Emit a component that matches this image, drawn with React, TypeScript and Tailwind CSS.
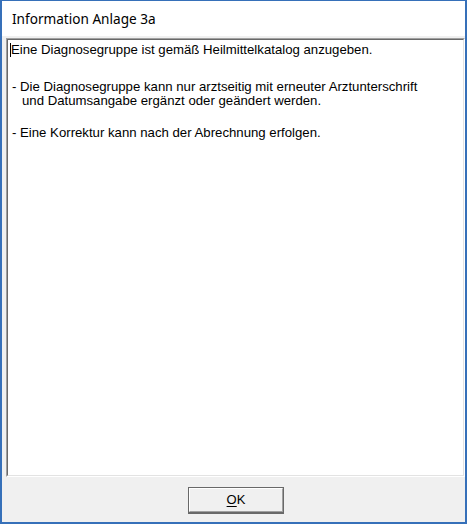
export default function App() {
  return (
    <div className="w-[467px] h-[524px] flex flex-col border-t border-x-2 border-b-2 border-[#3670b9] bg-[#f0f0f0] font-['Liberation_Sans',Arial,sans-serif] text-black">
      {/* title bar */}
      <div className="h-[35px] bg-white flex items-center pl-[10px] shrink-0">
        <span className="font-['Noto_Sans',sans-serif] text-[13.6px] leading-none">
          Information Anlage 3a
        </span>
      </div>

      {/* client area */}
      <div className="flex-1 flex flex-col pl-[4px] pt-[2px]">
        <div className="flex-1 flex border border-t-[#a0a0a0] border-l-[#a0a0a0] border-b-white border-r-white">
          <div className="flex-1 border border-t-[#696969] border-l-[#696969] border-b-[#e3e3e3] border-r-[#e3e3e3] bg-white pt-[3px] text-[13.2px] leading-[14px]">
            <div className="pl-[2px] flex items-center">
              <span className="inline-block w-px h-[14px] bg-black" />
              <span>Eine Diagnosegruppe ist gemäß Heilmittelkatalog anzugeben.</span>
            </div>
            <div className="h-[23px]" />
            <div className="pl-[4px]">- Die Diagnosegruppe kann nur arztseitig mit erneuter Arztunterschrift</div>
            <div className="pl-[14px]">und Datumsangabe ergänzt oder geändert werden.</div>
            <div className="h-[18px]" />
            <div className="pl-[4px]">- Eine Korrektur kann nach der Abrechnung erfolgen.</div>
          </div>
        </div>

        {/* footer */}
        <div className="flex justify-center pt-[10px] pb-[8px] pl-[1px] shrink-0">
          <button className="w-[96px] h-[27px] border border-[#696969] border-b-2 bg-[#f0f0f0] flex">
            <span className="flex-1 flex items-center justify-center border border-t-white border-l-white border-b-[#a0a0a0] border-r-[#a0a0a0] text-[13px]">
              <span>
                <span className="underline underline-offset-2">O</span>K
              </span>
            </span>
          </button>
        </div>
      </div>
    </div>
  );
}
